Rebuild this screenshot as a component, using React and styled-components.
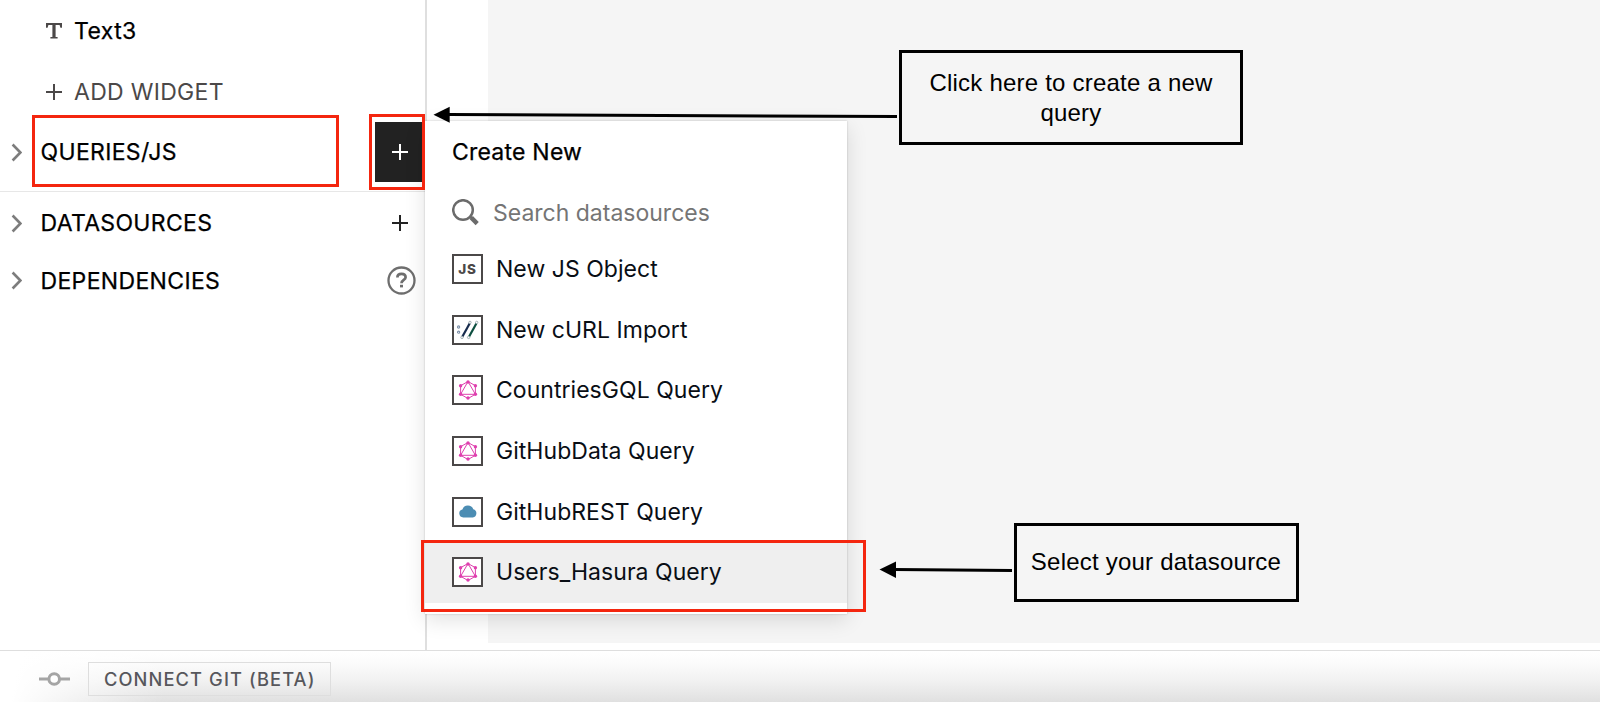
import React from 'react';
import styled, { createGlobalStyle } from 'styled-components';

const Global = createGlobalStyle`
  * { box-sizing: border-box; }
  body { margin: 0; overflow: hidden; font-family: Inter, "Liberation Sans", sans-serif; }
  svg { display: block; flex: none; }
`;

const Page = styled.div`
  position: relative;
  display: flex;
  flex-direction: column;
  width: 1600px;
  height: 702px;
  background: #fff;
  overflow: hidden;
`;

const Workspace = styled.div`
  display: flex;
  height: 650px;
`;

const Sidebar = styled.aside`
  width: 427px;
  border-right: 2px solid #dfdfdf;
  display: flex;
  flex-direction: column;
`;

const Canvas = styled.main`
  flex: 1;
  margin: 0 0 7px 61px;
  background: #f5f5f5;
`;

const WidgetRow = styled.div`
  display: flex;
  align-items: center;
  height: ${(p) => p.$height}px;
  padding-left: 46px;
  gap: 12px;
  font-size: 23px;
  color: ${(p) => p.$color || '#000'};
  -webkit-text-stroke: ${(p) => (p.$strong ? '0.25px' : '0')};
  letter-spacing: ${(p) => p.$spacing};
  white-space: nowrap;
`;

const Section = styled.div`
  display: flex;
  align-items: center;
  height: ${(p) => p.$height}px;
  padding: 0 0 0 11px;
  border-bottom: ${(p) => (p.$divider ? '1px solid #e7e7e7' : 'none')};
  padding-bottom: ${(p) => (p.$divider ? '9px' : '0')};
`;

const SectionTitle = styled.span`
  flex: 1;
  margin-left: 18.5px;
  font-size: 23px;
  -webkit-text-stroke: 0.25px;
  color: #000;
  letter-spacing: 0.34px;
`;

const AddButton = styled.div`
  display: flex;
  align-items: center;
  justify-content: center;
  width: 50px;
  height: 60px;
  color: ${(p) => (p.$active ? '#fff' : '#222')};
  background: ${(p) => (p.$active ? '#222' : 'transparent')};
`;

const HelpSlot = styled.div`
  width: 38px;
`;

const BottomBar = styled.footer`
  display: flex;
  align-items: center;
  height: 52px;
  padding: 5px 0 0 39px;
  gap: 18px;
  border-top: 1px solid #dedede;
  background: linear-gradient(100deg, #fff 20px, rgba(255, 255, 255, 0) 170px),
    linear-gradient(180deg, #fff 0, #fbfbfb 25%, #f0f0f0 62%, #e0e0e0 100%);
`;

const GitButton = styled.div`
  display: flex;
  align-items: center;
  height: 34px;
  width: 243px;
  padding-left: 15px;
  border: 1.5px solid #dedede;
  font-size: 18.3px;
  font-weight: 500;
  letter-spacing: 1.1px;
  color: #57575c;
  white-space: nowrap;
`;

const Menu = styled.div`
  position: absolute;
  left: 425px;
  top: 121px;
  width: 422px;
  height: 493px;
  padding-top: 1px;
  background: #fff;
  box-shadow: 0 0 2px rgba(0, 0, 0, 0.2), 0 6px 20px rgba(0, 0, 0, 0.12);
`;

const MenuTitle = styled.div`
  display: flex;
  align-items: center;
  height: 60px;
  padding-left: 27px;
  font-size: 23px;
  -webkit-text-stroke: 0.25px;
  letter-spacing: 0.22px;
  color: #000;
`;

const SearchRow = styled.div`
  display: flex;
  align-items: center;
  height: 56.6px;
  padding: 5px 0 0 27px;
  gap: 14px;
  font-size: 23px;
  color: #757575;
`;

const MenuItem = styled.div`
  display: flex;
  align-items: center;
  height: 60.7px;
  padding-left: 27px;
  gap: 13px;
  font-size: 23px;
  letter-spacing: 0.04px;
  color: #090e15;
  background: ${(p) => (p.$selected ? '#efefef' : 'transparent')};
  white-space: nowrap;
`;

const IconFrame = styled.div`
  display: flex;
  align-items: center;
  justify-content: center;
  width: 31px;
  height: 30px;
  border: 2px solid #4b4848;
  background: #fff;
  color: #4b4848;
  font-size: 13.5px;
  font-weight: 800;
  letter-spacing: 0.7px;
`;

const Highlight = styled.div`
  position: absolute;
  left: ${(p) => p.$x}px;
  top: ${(p) => p.$y}px;
  width: ${(p) => p.$w}px;
  height: ${(p) => p.$h}px;
  border: 3px solid #f4260f;
`;

const Note = styled.div`
  position: absolute;
  left: ${(p) => p.$x}px;
  top: ${(p) => p.$y}px;
  width: ${(p) => p.$w}px;
  height: ${(p) => p.$h}px;
  display: flex;
  align-items: center;
  justify-content: center;
  border: 3px solid #000;
  font-family: "Liberation Sans", Arial, sans-serif;
  font-size: 24px;
  line-height: 29.5px;
  letter-spacing: 0.22px;
  text-align: center;
  color: #000;
`;

const Arrows = styled.svg`
  position: absolute;
  left: 0;
  top: 0;
  pointer-events: none;
`;

const Chevron = () => (
  <svg width="11" height="19" viewBox="0 0 11 19" fill="none" stroke="#7d7d7d" strokeWidth="2.6">
    <path d="M1.6 1.5 L9.4 9.5 L1.6 17.5" />
  </svg>
);

const Plus = () => (
  <svg width="16" height="16" viewBox="0 0 16 16" fill="none" stroke="currentColor" strokeWidth="2">
    <path d="M8 0V16M0 8H16" />
  </svg>
);

const TextGlyph = () => (
  <svg width="16" height="16" viewBox="0 0 16 16" fill="#4b4848">
    <path d="M0 0H16V4.8H14.4L13.6 2H9.6V14H11.6V15.6H4.4V14H6.4V2H2.4L1.6 4.8H0Z" />
  </svg>
);

const Help = () => (
  <svg width="29" height="29" viewBox="0 0 29 29" fill="none" stroke="#6e6e6e">
    <circle cx="14.5" cy="14.5" r="13" strokeWidth="2.3" />
    <path d="M10.4 11.6C10.4 9.2 12 7.9 14.5 7.9S18.6 9.3 18.6 11.3C18.6 14 14.5 13.8 14.5 17.2" strokeWidth="2.7" />
    <path d="M14.5 18.8V21.4" strokeWidth="3" />
  </svg>
);

const Search = () => (
  <svg width="27" height="27" viewBox="0 0 27 27" fill="none" stroke="#6b6b6b">
    <circle cx="11" cy="11" r="9.8" strokeWidth="2.5" />
    <path d="M17.6 17.2L20.5 19.8" strokeWidth="2.6" />
    <path d="M19.3 18.6L25.2 24.6" strokeWidth="4.4" />
  </svg>
);

const Commit = () => (
  <svg width="31" height="14" viewBox="0 0 31 14" fill="none" stroke="#a5a5a5" strokeWidth="3">
    <path d="M0 7H9.5M21 7H31" />
    <circle cx="15.2" cy="7" r="5.3" fill="#fff" />
  </svg>
);

const Curl = () => (
  <svg width="23" height="20" viewBox="0 0 23 20" fill="none">
    <g stroke="#7d90a8" strokeWidth="1.1">
      <circle cx="2.6" cy="7" r="1.1" />
      <circle cx="2.6" cy="12.2" r="1.1" />
    </g>
    <path d="M13.8 3.2L6.3 16.8" stroke="#172b4d" strokeWidth="2.2" />
    <path d="M20.5 3.2L13 16.8" stroke="#0d4f40" strokeWidth="2.2" />
    <g stroke="#8fa0a4" strokeWidth="0.8" fill="#fff">
      <circle cx="14" cy="2.4" r="1.2" />
      <circle cx="6" cy="17.4" r="1.2" />
      <circle cx="20.7" cy="2.4" r="1.2" />
      <circle cx="12.6" cy="17.4" r="1.2" />
    </g>
  </svg>
);

const GraphQL = () => (
  <svg width="20" height="20" viewBox="0 0 20 20" fill="none" stroke="#df3fae" strokeWidth="1">
    <path d="M10 1.5L17.4 5.7V14.3L10 18.5L2.6 14.3V5.7Z" />
    <path d="M10 1.5L17.4 14.3H2.6Z" />
    <g fill="#df3fae" stroke="none">
      <circle cx="10" cy="2" r="1.7" />
      <circle cx="17.4" cy="5.7" r="1.7" />
      <circle cx="17.4" cy="14.3" r="1.7" />
      <circle cx="10" cy="18" r="1.7" />
      <circle cx="2.6" cy="14.3" r="1.7" />
      <circle cx="2.6" cy="5.7" r="1.7" />
    </g>
  </svg>
);

const Cloud = () => (
  <svg width="18" height="13" viewBox="0 0 18 13" fill="#4c8db3">
    <path d="M4.3 12.4A4 4 0 0 1 3.4 4.5A5.8 5.8 0 0 1 14.3 4.2A4.2 4.2 0 0 1 13.8 12.4Z" />
  </svg>
);

const items = [
  { label: 'New JS Object', icon: 'JS' },
  { label: 'New cURL Import', icon: <Curl /> },
  { label: 'CountriesGQL Query', icon: <GraphQL /> },
  { label: 'GitHubData Query', icon: <GraphQL /> },
  { label: 'GitHubREST Query', icon: <Cloud /> },
  { label: 'Users_Hasura Query', icon: <GraphQL />, selected: true },
];

export default function App() {
  return (
    <Page>
      <Global />
      <Workspace>
        <Sidebar>
          <WidgetRow $height={61} $spacing="0.4px" $strong>
            <TextGlyph />
            Text3
          </WidgetRow>
          <WidgetRow $height={61} $color="#4b4848" $spacing="0.3px">
            <Plus />
            ADD WIDGET
          </WidgetRow>
          <Section $height={70} $divider>
            <Chevron />
            <SectionTitle>QUERIES/JS</SectionTitle>
            <AddButton $active>
              <Plus />
            </AddButton>
          </Section>
          <Section $height={62}>
            <Chevron />
            <SectionTitle>DATASOURCES</SectionTitle>
            <AddButton>
              <Plus />
            </AddButton>
          </Section>
          <Section $height={53}>
            <Chevron />
            <SectionTitle>DEPENDENCIES</SectionTitle>
            <HelpSlot>
              <Help />
            </HelpSlot>
          </Section>
        </Sidebar>
        <Canvas />
      </Workspace>
      <BottomBar>
        <Commit />
        <GitButton>CONNECT GIT (BETA)</GitButton>
      </BottomBar>
      <Menu>
        <MenuTitle>Create New</MenuTitle>
        <SearchRow>
          <Search />
          Search datasources
        </SearchRow>
        {items.map((item) => (
          <MenuItem key={item.label} $selected={item.selected}>
            <IconFrame>{item.icon}</IconFrame>
            {item.label}
          </MenuItem>
        ))}
      </Menu>
      <Highlight $x={32} $y={115} $w={307} $h={72} />
      <Highlight $x={369} $y={114} $w={56} $h={76} />
      <Highlight $x={421} $y={540} $w={445} $h={72} />
      <Arrows width="1600" height="702" viewBox="0 0 1600 702" stroke="#000" strokeWidth="3">
        <path d="M448 114.6L897 116.5" />
        <path d="M894 569.5L1012 570.5" />
        <path d="M433.5 114.7L449.7 106.8V122.8Z" fill="#000" stroke="none" />
        <path d="M879.5 569.6L896 561.4V578Z" fill="#000" stroke="none" />
      </Arrows>
      <Note $x={899} $y={50} $w={344} $h={95}>
        Click here to create a new
        <br />
        query
      </Note>
      <Note $x={1013.5} $y={522.5} $w={285} $h={79}>
        Select your datasource
      </Note>
    </Page>
  );
}
